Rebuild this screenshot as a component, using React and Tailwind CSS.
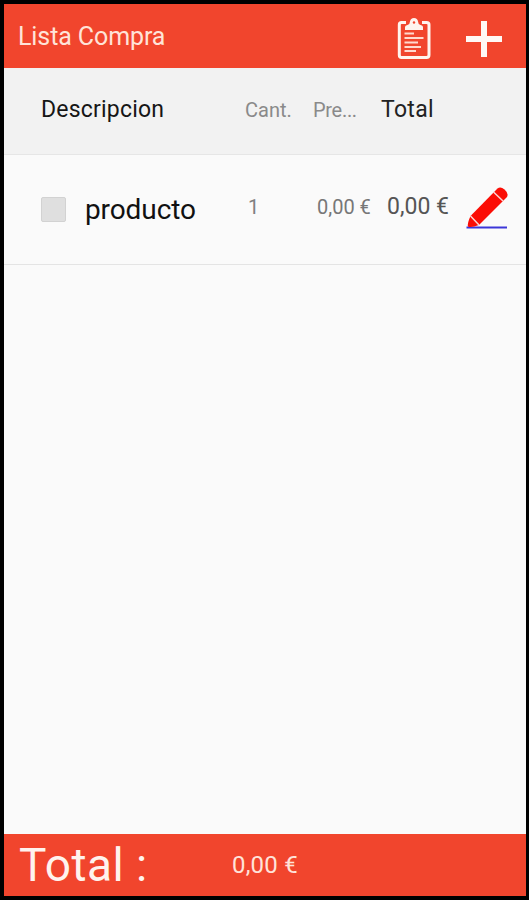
const items = [{ id: 1, name: 'producto', quantity: '1', price: '0,00 €', total: '0,00 €' }];

function ClipboardIcon() {
  return (
    <svg width="34" height="42" viewBox="0 0 34 42" fill="none" className="shrink-0">
      <path d="M9 4.500H4.500Q2.300 4.500 2.300 6.700V37Q2.300 39.500 4.500 39.500H29.500Q32 39.500 32 37V6.700Q32 4.500 29.500 4.500H25" stroke="#fff4ee" strokeWidth="3" />
      <path d="M8 12V9Q8 7.500 10.500 7Q13 6 13 3.500Q13.500 0 17 0Q20.500 0 21 3.500Q21 6 23.500 7Q26 7.500 26 9V12Z" fill="#fff4ee" />
      <circle cx="17" cy="4.500" r="1.200" fill="#f1452d" />
      <path d="M7.500 15.500H17M7.500 20H26.500M7.500 24.500H21M7.500 29H24M7.500 33H19" stroke="#ffd9cf" strokeWidth="2" />
    </svg>
  );
}

function PlusIcon() {
  return (
    <svg width="36" height="36" viewBox="0 0 36 36" className="shrink-0">
      <path d="M18 0V36M0 18H36" stroke="#fff8f5" strokeWidth="6" />
    </svg>
  );
}

function PencilIcon() {
  return (
    <svg width="42" height="44" viewBox="0 0 42 44" className="shrink-0">
      <path d="M0.500 41.500H41" stroke="#3c36d8" strokeWidth="1.800" />
      <path d="M2 40.500Q1 38 4.500 30L31.500 2.500Q34.500 0 38.500 3.500Q43.500 8 40.500 11.500L13 39Q5 42 2 40.500Z" fill="#fb0d05" />
      <path d="M27.500 6L37 15M4.500 30L13 39" stroke="#fbd5d2" strokeWidth="1.500" />
    </svg>
  );
}

export default function App() {
  return (
    <div className="w-[529px] h-[900px] bg-black pt-1 pb-1 pl-1 pr-[3px] font-['Roboto',sans-serif]">
      <div className="h-full flex flex-col bg-[#fafafa] whitespace-nowrap">
        {/* App bar */}
        <header className="h-16 shrink-0 flex items-center bg-[#f1452d] pl-3.5 pr-6">
          <h1 className="flex-1 text-[25px] leading-none tracking-[-0.1px] text-[#ffe3d8]">Lista Compra</h1>
          <button className="mt-1.5 mr-[35px]"><ClipboardIcon /></button>
          <button className="mt-1.5"><PlusIcon /></button>
        </header>

        {/* Column titles */}
        <div className="h-[87px] shrink-0 grid grid-cols-[204px_68px_68px_1fr] items-baseline pt-[25px] pl-[37px] bg-[#f2f2f2] border-b border-[#e6e6e6]">
          <span className="text-[23px] tracking-[0.2px] text-[#161616]">Descripcion</span>
          <span className="text-xl text-[#8a8a8a]">Cant.</span>
          <span className="text-xl tracking-[-0.3px] text-[#8a8a8a]">Pre...</span>
          <span className="text-[23px] tracking-[0.3px] text-[#222]">Total</span>
        </div>

        {/* Product rows */}
        <main className="flex-1">
          {items.map(item => (
            <div key={item.id} className="h-[110px] flex items-center pl-[37px] pr-[18px] border-b border-[#e4e4e4]">
              <span className="size-[25px] shrink-0 mb-px rounded-xs bg-[#dfdfdf] border border-[#d2d2d2]" />
              <span className="w-[163px] ml-[19px] text-[28px] leading-none tracking-[-0.1px] text-[#111]">{item.name}</span>
              <span className="w-[69px] pb-[5px] text-xl leading-none text-[#808080]">{item.quantity}</span>
              <span className="w-[70px] pb-[5px] text-xl leading-none text-[#777]">{item.price}</span>
              <span className="flex-1 pb-1.5 text-[23px] leading-none text-[#555]">{item.total}</span>
              <button className="pb-[3px]"><PencilIcon /></button>
            </div>
          ))}
        </main>

        {/* Grand total */}
        <footer className="h-[62px] shrink-0 flex items-center pl-[15px] bg-[#f1452d]">
          <span className="w-[213px] text-[46px] leading-none tracking-[0.5px] text-[#fff3ee]">Total :</span>
          <span className="text-2xl leading-none tracking-[0.2px] text-[#ffe3da]">0,00 €</span>
        </footer>
      </div>
    </div>
  );
}
